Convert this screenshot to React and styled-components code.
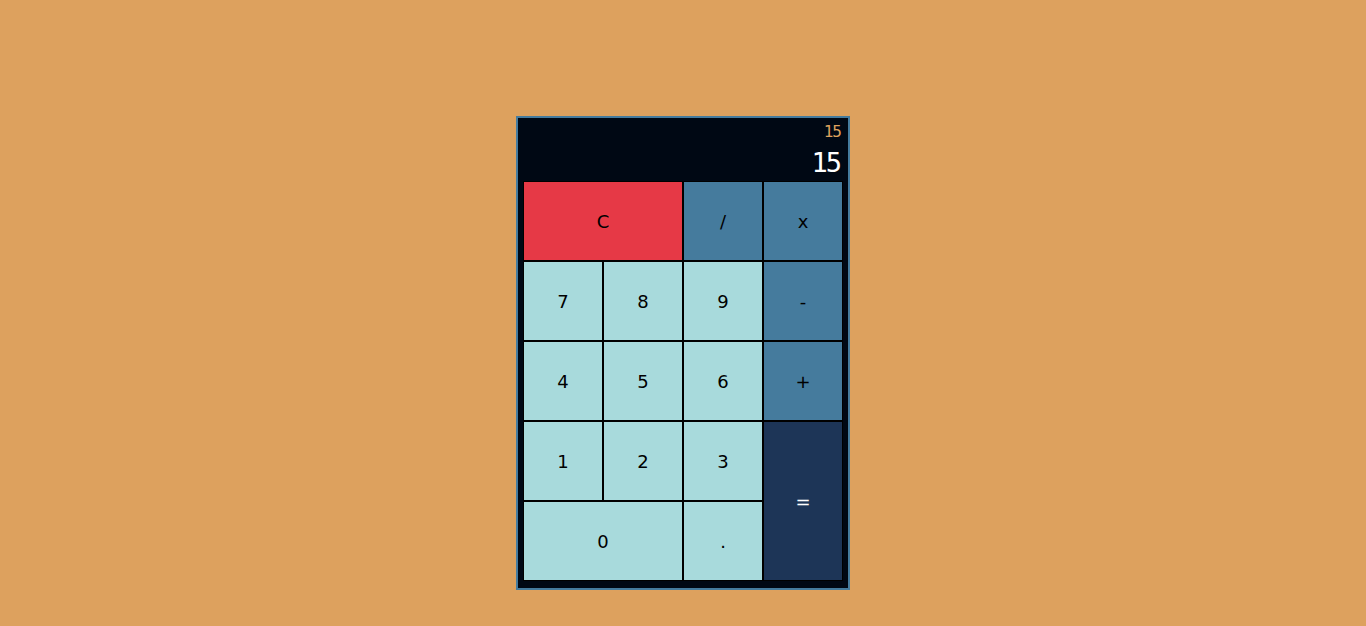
import React, { useState } from "react";
import styled, { createGlobalStyle } from "styled-components";

const GlobalStyle = createGlobalStyle`
    body {
        margin: 0;
        background: #dda15e;
        font-family: "DejaVu Sans", sans-serif;
    }
`;

const Page = styled.div`
    min-height: 100vh;
    padding-top: 116px;
    box-sizing: border-box;
`;

const Calculator = styled.div`
    width: 320px;
    margin: 0 auto;
    padding: 0 5px 7px;
    border: 2px solid #457b9d;
    background: #000814;
`;

const Display = styled.div`
    height: 63px;
    box-sizing: border-box;
    padding: 6px 1px 0 0;
    display: flex;
    flex-direction: column;
    align-items: flex-end;
    font-family: "DejaVu Sans Mono", monospace;
    font-weight: 200;
`;

const Previous = styled.div`
    font-size: 16px;
    line-height: 16px;
    letter-spacing: -1px;
    margin-right: 1px;
    color: #dda15e;
`;

const Current = styled.div`
    margin-top: 9px;
    font-size: 27px;
    line-height: 27px;
    letter-spacing: -2px;
    margin-right: 2px;
    color: #ffffff;
`;

const Keys = styled.div`
    display: grid;
    grid-template-columns: repeat(4, 80px);
    grid-auto-rows: 80px;
`;

const colors = {
    clear: ["#e63946", "#000"],
    op: ["#457b9d", "#000"],
    num: ["#a8dadc", "#000"],
    equals: ["#1d3557", "#fff"],
};

const Key = styled.button`
    box-sizing: border-box;
    border: 1px solid #000;
    margin: 0;
    padding: 0;
    background: ${({ kind }) => colors[kind][0]};
    color: ${({ kind }) => colors[kind][1]};
    font-family: "DejaVu Sans", sans-serif;
    font-size: 18px;
    cursor: pointer;
    grid-column: span ${({ cols }) => cols || 1};
    grid-row: span ${({ rows }) => rows || 1};
`;

const keys = [
    { label: "C", kind: "clear", cols: 2 },
    { label: "/", kind: "op" },
    { label: "x", kind: "op" },
    { label: "7", kind: "num" },
    { label: "8", kind: "num" },
    { label: "9", kind: "num" },
    { label: "-", kind: "op" },
    { label: "4", kind: "num" },
    { label: "5", kind: "num" },
    { label: "6", kind: "num" },
    { label: "+", kind: "op" },
    { label: "1", kind: "num" },
    { label: "2", kind: "num" },
    { label: "3", kind: "num" },
    { label: "=", kind: "equals", rows: 2 },
    { label: "0", kind: "num", cols: 2 },
    { label: ".", kind: "num" },
];

function App() {
    const [previous] = useState("15");
    const [current] = useState("15");
    return (
        <Page>
            <GlobalStyle />
            <Calculator>
                <Display>
                    <Previous>{previous}</Previous>
                    <Current>{current}</Current>
                </Display>
                <Keys>
                    {keys.map((k) => (
                        <Key key={k.label} kind={k.kind} cols={k.cols} rows={k.rows}>
                            {k.label}
                        </Key>
                    ))}
                </Keys>
            </Calculator>
        </Page>
    );
}

export default App;
